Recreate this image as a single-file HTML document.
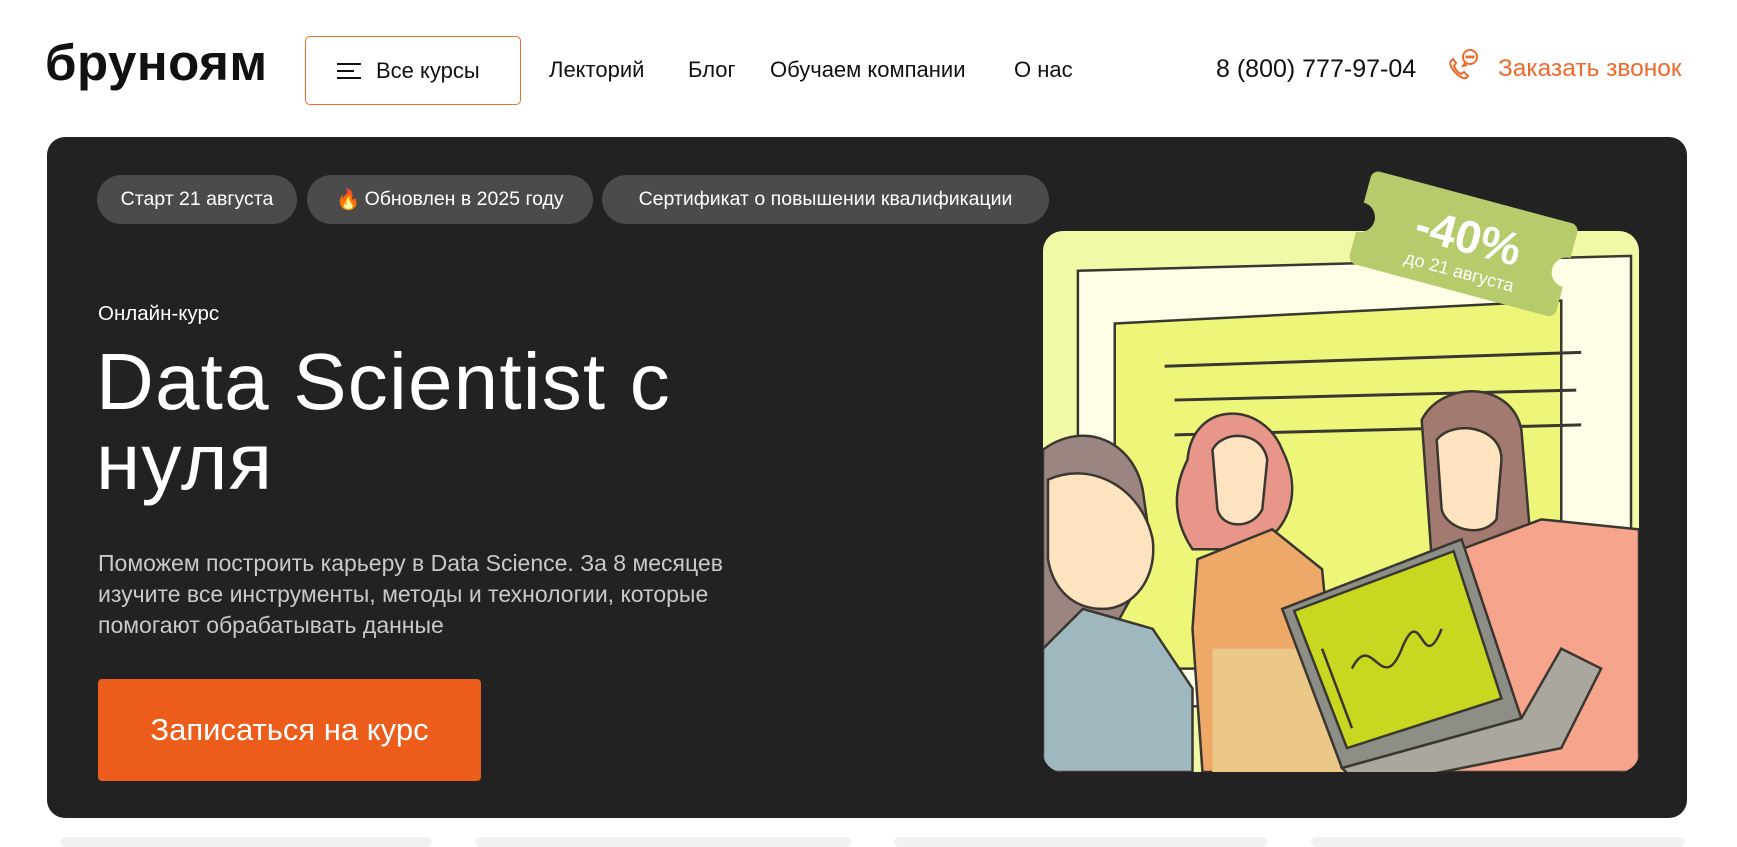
<!DOCTYPE html>
<html><head><meta charset="utf-8"><style>
*{margin:0;padding:0;box-sizing:border-box}
body{width:1737px;height:841px;overflow:hidden;background:#fff;font-family:"Liberation Sans",sans-serif;position:relative;color:#111}
.abs{position:absolute}
.logo{left:45px;top:33px;font-size:51px;font-weight:bold;letter-spacing:0.5px;color:#111}
.btn{left:305px;top:36px;width:216px;height:69px;border:1.5px solid #ee6a2a;border-radius:5px;display:flex;align-items:center;padding-left:30px;font-size:22px}
.nav{top:57px;font-size:22px;color:#111}
.card{left:47px;top:137px;width:1640px;height:681px;background:#222;border-radius:18px}
.chip{top:175px;height:49px;border-radius:25px;background:#4b4b4b;color:#fff;font-size:19.5px;display:flex;align-items:center;justify-content:center}
.cta{left:98px;top:679px;width:383px;height:102px;background:#ec5c1a;border-radius:4px;color:#fff;font-size:31px;display:flex;align-items:center;justify-content:center}
.bc{top:837px;height:10px;background:#f0f1f3;border-radius:10px}
</style></head><body>
<div class="abs logo">бруноям</div>
<div class="abs btn"><svg width="26" height="18" viewBox="0 0 26 18" style="margin-right:14px"><path d="M1 2H25M1 9H18M1 16H25" stroke="#111" stroke-width="2"/></svg>Все курсы</div>
<div class="abs nav" style="left:549px">Лекторий</div>
<div class="abs nav" style="left:688px">Блог</div>
<div class="abs nav" style="left:770px">Обучаем компании</div>
<div class="abs nav" style="left:1014px">О нас</div>
<div class="abs nav" style="left:1216px;font-size:25px;top:55px">8 (800) 777-97-04</div>
<svg class="abs" style="left:1446px;top:48px" width="34" height="34" viewBox="0 0 34 34" fill="none" stroke="#ee6a2a" stroke-width="2"><path d="M6 12c-3 2-2 6 2 11s9 8 12 7l2-2-4-4-3 2c-3-1-6-5-7-8l2-3-3-4z"/><circle cx="24" cy="9" r="7"/><path d="M19 15l-2 3 4-1"/><circle cx="21" cy="9" r=".6" fill="#ee6a2a"/><circle cx="24" cy="9" r=".6" fill="#ee6a2a"/><circle cx="27" cy="9" r=".6" fill="#ee6a2a"/></svg>
<div class="abs nav" style="left:1498px;color:#ee6a2a;font-size:24.5px;top:55px">Заказать звонок</div>

<div class="abs card"></div>
<div class="abs chip" style="left:97px;width:200px">Старт 21 августа</div>
<div class="abs chip" style="left:307px;width:286px"><span style="color:#f07a2a;margin-right:4px">🔥</span>Обновлен в 2025 году</div>
<div class="abs chip" style="left:602px;width:447px">Сертификат о повышении квалификации</div>
<div class="abs" style="left:98px;top:302px;font-size:20.5px;color:#fff">Онлайн-курс</div>
<div class="abs" style="left:96px;top:342px;font-size:80px;line-height:80px;color:#fff;letter-spacing:1.2px">Data Scientist с<br>нуля</div>
<div class="abs" style="left:98px;top:548px;width:690px;font-size:23px;line-height:31px;color:#c9c9c9">Поможем построить карьеру в Data Science. За 8 месяцев изучите все инструменты, методы и технологии, которые помогают обрабатывать данные</div>
<div class="abs cta">Записаться на курс</div>

<svg class="abs" style="left:1043px;top:231px" width="596" height="541" viewBox="0 0 598 544" preserveAspectRatio="none">
<defs><clipPath id="c"><rect width="598" height="544" rx="20"/></clipPath></defs>
<g clip-path="url(#c)" stroke="#3a3630" stroke-width="2.5">
<rect width="598" height="544" fill="#f2f9a6" stroke="none"/>
<path d="M35 40L590 25V470L35 480Z" fill="#fefee6"/>
<path d="M72 93L520 70V440L72 440Z" fill="#eef67a"/>
<path d="M122 136L540 122M132 170L535 160M132 205L540 195" fill="none" stroke-width="3"/>
<path d="M0 220C40 190 90 210 100 260L110 330L60 420L0 430Z" fill="#9a8580"/>
<path d="M5 250C50 230 100 260 110 310C115 350 90 380 60 380C30 380 10 360 5 330Z" fill="#fde3c0"/>
<path d="M0 420L40 380L110 400L150 460L150 544H0Z" fill="#9fb8c0"/>
<path d="M145 230C150 170 220 170 240 220C260 260 250 300 210 320L150 320C130 290 130 260 145 230Z" fill="#e8968a"/>
<path d="M170 220C180 200 220 200 225 230L220 280C210 300 180 300 175 280Z" fill="#fde3c0"/>
<path d="M155 330L230 300L280 340L300 544H160L150 400Z" fill="#eea868"/>
<path d="M170 420L600 420V544H170Z" fill="#ebc788" stroke="none"/>
<path d="M380 190C400 150 470 150 480 200L490 320L450 340L390 330Z" fill="#a27a70"/>
<path d="M395 210C410 190 460 195 460 230L455 290C440 310 405 300 400 280Z" fill="#fde3c0"/>
<path d="M420 320L500 290L598 300V544H400L380 400Z" fill="#f6a48c"/>
<path d="M240 380L420 310L480 490L300 540Z" fill="#8d8e86"/>
<path d="M252 382L412 322L460 470L305 520Z" fill="#c8d820"/>
<path d="M280 420L310 500M310 440C330 400 340 470 360 420S380 450 400 400" fill="none"/>
<path d="M300 540L480 490L520 420L560 440L520 520L320 560Z" fill="#a9a79e"/>
</g>
</svg>
<svg class="abs" style="left:1342px;top:166px" width="245" height="160" viewBox="0 0 245 160">
<g transform="rotate(15 122 80)"><path d="M22 30H220A8 8 0 0 1 228 38V64A15 15 0 0 0 228 94V118A8 8 0 0 1 220 126H22A8 8 0 0 1 14 118V94A15 15 0 0 0 14 64V38A8 8 0 0 1 22 30Z" fill="#b5cb6c"/>
<text x="124" y="86" text-anchor="middle" font-family="Liberation Sans" font-weight="bold" font-size="46" fill="#fff">-40%</text>
<text x="124" y="112" text-anchor="middle" font-family="Liberation Sans" font-size="18" fill="#fff">до 21 августа</text></g></svg>

<div class="abs bc" style="left:60px;width:372px"></div>
<div class="abs bc" style="left:475px;width:376px"></div>
<div class="abs bc" style="left:894px;width:373px"></div>
<div class="abs bc" style="left:1311px;width:374px"></div>
</body></html>
